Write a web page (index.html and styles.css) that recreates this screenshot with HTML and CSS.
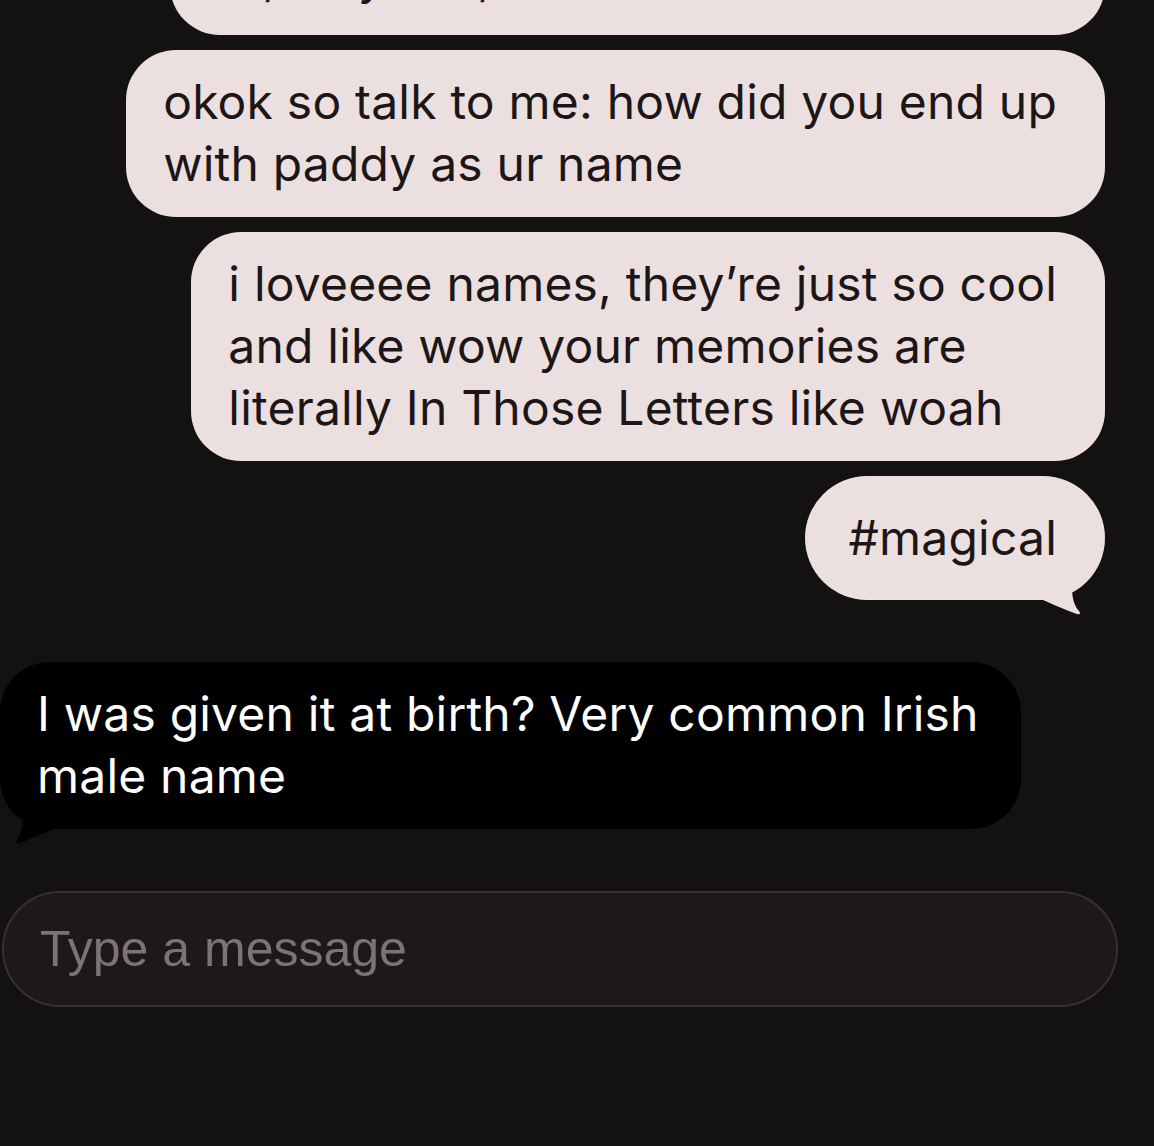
FILE: index.html
```html
<!DOCTYPE html>
<html lang="en">
<head>
<meta charset="utf-8">
<title>Chat</title>
<link rel="stylesheet" href="styles.css">
</head>
<body>
<main class="chat">
  <div class="bubble sent first">ok, why is it, like what does it mean!!!</div>
  <div class="bubble sent">okok so talk to me: how did you end up<br>with paddy as ur name</div>
  <div class="bubble sent">i loveeee names, they’re just so cool<br>and like wow your memories are<br>literally In Those Letters like woah</div>
  <div class="bubble sent single tail-right">#magical
    <svg class="tail tail-r" width="50" height="36" viewBox="0 0 50 36"><path d="M0 0 H40 V6 C40 17 43 25 47 29 C49 31 48 33 45 32 C34 28 20 22 4 15 Z" fill="#ebdfe0"/></svg>
  </div>
  <div class="bubble received">I was given it at birth? Very common Irish<br>male name
    <svg class="tail tail-l" width="50" height="36" viewBox="0 0 50 36"><path d="M50 0 H8 V6 C8 17 5 25 2 29 C0 32 2 33 5 32 C16 28 28 22 46 15 Z" fill="#000"/></svg>
  </div>
  <div class="composer"><span class="placeholder">Type a message</span></div>
</main>
</body>
</html>
```
FILE: styles.css
```css
html, body {
  margin: 0;
  padding: 0;
  background: #141211;
}
body {
  width: 1154px;
  height: 1146px;
  overflow: hidden;
}
.chat {
  display: flex;
  flex-direction: column;
  align-items: flex-end;
  padding-right: 49px;
  margin-top: -71px;
  font-family: "Inter", "Noto Sans", sans-serif;
  font-size: 48px;
  letter-spacing: 0.2px;
  line-height: 62px;
}
.bubble {
  position: relative;
  box-sizing: border-box;
  padding: 21px 48px 22px 37px;
  border-radius: 50px;
  white-space: nowrap;
}
.sent {
  background: #ebdfe0;
  color: #1c1617;
  margin-bottom: 15px;
}
.sent.first {
  padding-top: 17px;
  padding-bottom: 27px;
}
.sent.single {
  padding-top: 31px;
  padding-bottom: 31px;
  padding-left: 43px;
  margin-bottom: 62px;
  border-radius: 62px;
}
.received {
  align-self: flex-start;
  background: #000;
  color: #fff;
  padding-right: 42px;
  margin-bottom: 62px;
}
.tail {
  position: absolute;
  display: block;
}
.tail-r {
  right: 23px;
  bottom: -18px;
}
.tail-l {
  left: 15px;
  bottom: -18px;
}
.composer {
  align-self: flex-start;
  box-sizing: border-box;
  width: 1116px;
  height: 116px;
  margin-left: 2px;
  padding-left: 36px;
  display: flex;
  align-items: center;
  background: #1d1819;
  border: 2px solid #36302f;
  border-radius: 58px;
}
.placeholder {
  font-family: "Liberation Sans", Arial, sans-serif;
  font-size: 50px;
  letter-spacing: 0;
  color: #7b7374;
}
```
